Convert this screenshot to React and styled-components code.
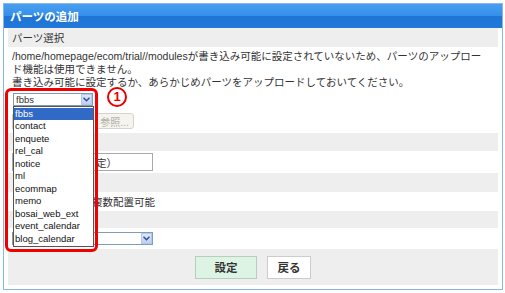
import React from "react";
import styled, { createGlobalStyle } from "styled-components";

// global reset so the frame sits where the screenshot has it
const GlobalStyle = createGlobalStyle`
  html, body { margin: 0; padding: 0; background: #fff; }
  body {
    font-family: "Liberation Sans", "Noto Sans CJK JP", sans-serif;
    color: #333;
  }
`;

const Page = styled.div`
  padding: 3px;
`;

const Frame = styled.div`
  width: 500px;
  height: 287px;
  box-sizing: border-box;
  border: 1px solid #86b6ea;
  display: flex;
  flex-direction: column;
`;

const Header = styled.div`
  height: 24px;
  flex: none;
  display: flex;
  align-items: center;
  padding-left: 6px;
  background: linear-gradient(#4a9ef0 0%, #3490ea 48%, #1f74d4 52%, #2279da 100%);
  color: #fff;
  font-weight: bold;
  font-size: 11.5px;
`;

const Body = styled.div`
  flex: 1;
  padding: 0 4px 4px 4px;
  display: flex;
  flex-direction: column;
`;

const Row = styled.div`
  height: ${(p) => p.$h}px;
  flex: none;
  box-sizing: border-box;
  background: ${(p) => (p.$gray ? "#eeeeee" : "#fff")};
  display: flex;
  align-items: center;
  justify-content: ${(p) => (p.$center ? "center" : "flex-start")};
  gap: ${(p) => (p.$center ? "10px" : "0")};
  padding-left: ${(p) => (p.$center ? "0" : "4px")};
  font-size: 10.5px;
`;

const DescCell = styled.div`
  height: 86px;
  flex: none;
  box-sizing: border-box;
  padding: 3px 0 4px 4px;
  display: flex;
  flex-direction: column;
  font-size: 10.5px;
`;

const Message = styled.div`
  line-height: 13px;
  white-space: nowrap;
`;

const SelectLine = styled.div`
  height: 20px;
  display: flex;
  align-items: center;
  gap: 14px;
  padding-left: 1px;
`;

const SelectWrap = styled.div`
  position: relative;
  z-index: 5;
`;

const FakeSelect = styled.div`
  width: ${(p) => p.$w}px;
  height: 13px;
  box-sizing: border-box;
  border: 1px solid #7f9db9;
  background: #fff;
  display: flex;
  align-items: center;
  justify-content: space-between;
  font-size: 9.5px;
  padding-left: 2px;
`;

const ArrowBox = styled.span`
  width: 11px;
  height: 11px;
  box-sizing: border-box;
  border: 1px solid #b4c8ee;
  background: linear-gradient(#dbe7fb, #bcd1f6);
  display: flex;
  align-items: center;
  justify-content: center;
`;

const DropList = styled.ul`
  position: absolute;
  top: 13px;
  left: 0;
  width: 81px;
  margin: 0;
  padding: 1px 0;
  list-style: none;
  box-sizing: border-box;
  border: 1px solid #555;
  background: #fff;
`;

const Item = styled.li`
  height: 12.5px;
  line-height: 12.5px;
  padding-left: 1px;
  font-size: 9.5px;
  color: ${(p) => (p.$active ? "#fff" : "#111")};
  background: ${(p) => (p.$active ? "#3169c6" : "transparent")};
`;

const RedFrame = styled.div`
  position: absolute;
  left: -8px;
  top: -5px;
  width: 93px;
  height: 164px;
  box-sizing: border-box;
  border: 3px solid #f20000;
  border-radius: 6px;
  pointer-events: none;
`;

const Marker = styled.span`
  width: 20px;
  height: 20px;
  box-sizing: border-box;
  border: 2px solid #e60000;
  border-radius: 50%;
  color: #e60000;
  font-weight: bold;
  font-size: 13px;
  display: flex;
  align-items: center;
  justify-content: center;
  margin-top: -5px;
`;

const FileLine = styled.div`
  margin-top: 4px;
  height: 16px;
  display: flex;
  align-items: center;
  gap: 2px;
`;

const FileBox = styled.div`
  width: 81px;
  height: 15px;
  box-sizing: border-box;
  border: 1px solid #ccc;
  background: #f7f7f7;
`;

const BrowseButton = styled.div`
  width: 39px;
  height: 16px;
  box-sizing: border-box;
  border: 1px solid #d4d4cc;
  border-radius: 3px;
  background: #f5f4ee;
  color: #b0b0a8;
  font-size: 10px;
  display: flex;
  align-items: center;
  justify-content: center;
`;

// the start of this text sits under the open list, only its tail shows
const TextInput = styled.div`
  width: 141px;
  height: 18px;
  box-sizing: border-box;
  border: 1px solid #a9a9a9;
  padding-left: 83px;
  display: flex;
  align-items: center;
  white-space: nowrap;
  overflow: hidden;
`;

const HiddenLead = styled.span`
  width: 80px;
  flex: none;
`;

const ActionButton = styled.div`
  width: ${(p) => p.$w}px;
  height: 23px;
  box-sizing: border-box;
  border: 1px solid ${(p) => (p.$primary ? "#b9cdbf" : "#cccccc")};
  background: ${(p) => (p.$primary ? "#ddf4e5" : "#fff")};
  font-weight: bold;
  font-size: 11.5px;
  color: #333;
  display: flex;
  align-items: center;
  justify-content: center;
`;

const Chevron = () => (
  <svg width="7" height="5" viewBox="0 0 7 5">
    <path d="M0.5 0.8 L3.5 3.8 L6.5 0.8" fill="none" stroke="#2d4f8c" strokeWidth="1.4" />
  </svg>
);

const parts = [
  "fbbs",
  "contact",
  "enquete",
  "rel_cal",
  "notice",
  "ml",
  "ecommap",
  "memo",
  "bosai_web_ext",
  "event_calendar",
  "blog_calendar",
];

export default function App() {
  return (
    <Page>
      <GlobalStyle />
      <Frame>
        <Header>パーツの追加</Header>
        <Body>
          <Row $gray $h={19}>パーツ選択</Row>

          <DescCell>
            <Message>
              /home/homepage/ecom/trial//modulesが書き込み可能に設定されていないため、パーツのアップロー
              <br />
              ド機能は使用できません。
              <br />
              書き込み可能に設定するか、あらかじめパーツをアップロードしておいてください。
            </Message>
            <SelectLine>
              <SelectWrap>
                <FakeSelect $w={80}>
                  fbbs
                  <ArrowBox><Chevron /></ArrowBox>
                </FakeSelect>
                <DropList>
                  {parts.map((p, i) => (
                    <Item key={p} $active={i === 0}>{p}</Item>
                  ))}
                </DropList>
                <RedFrame />
              </SelectWrap>
              <Marker>1</Marker>
            </SelectLine>
            <FileLine>
              <FileBox />
              <BrowseButton>参照...</BrowseButton>
            </FileLine>
          </DescCell>

          <Row $gray $h={18} />
          <Row $h={22}>
            <TextInput>定）</TextInput>
          </Row>
          <Row $gray $h={19} />
          <Row $h={19}>
            <HiddenLead />
            複数配置可能
          </Row>
          <Row $gray $h={17} />
          <Row $h={21}>
            <FakeSelect $w={141}>
              <span />
              <ArrowBox><Chevron /></ArrowBox>
            </FakeSelect>
          </Row>
          <Row $gray $center $h={36}>
            <ActionButton $primary $w={62}>設定</ActionButton>
            <ActionButton $w={44}>戻る</ActionButton>
          </Row>
        </Body>
      </Frame>
    </Page>
  );
}
